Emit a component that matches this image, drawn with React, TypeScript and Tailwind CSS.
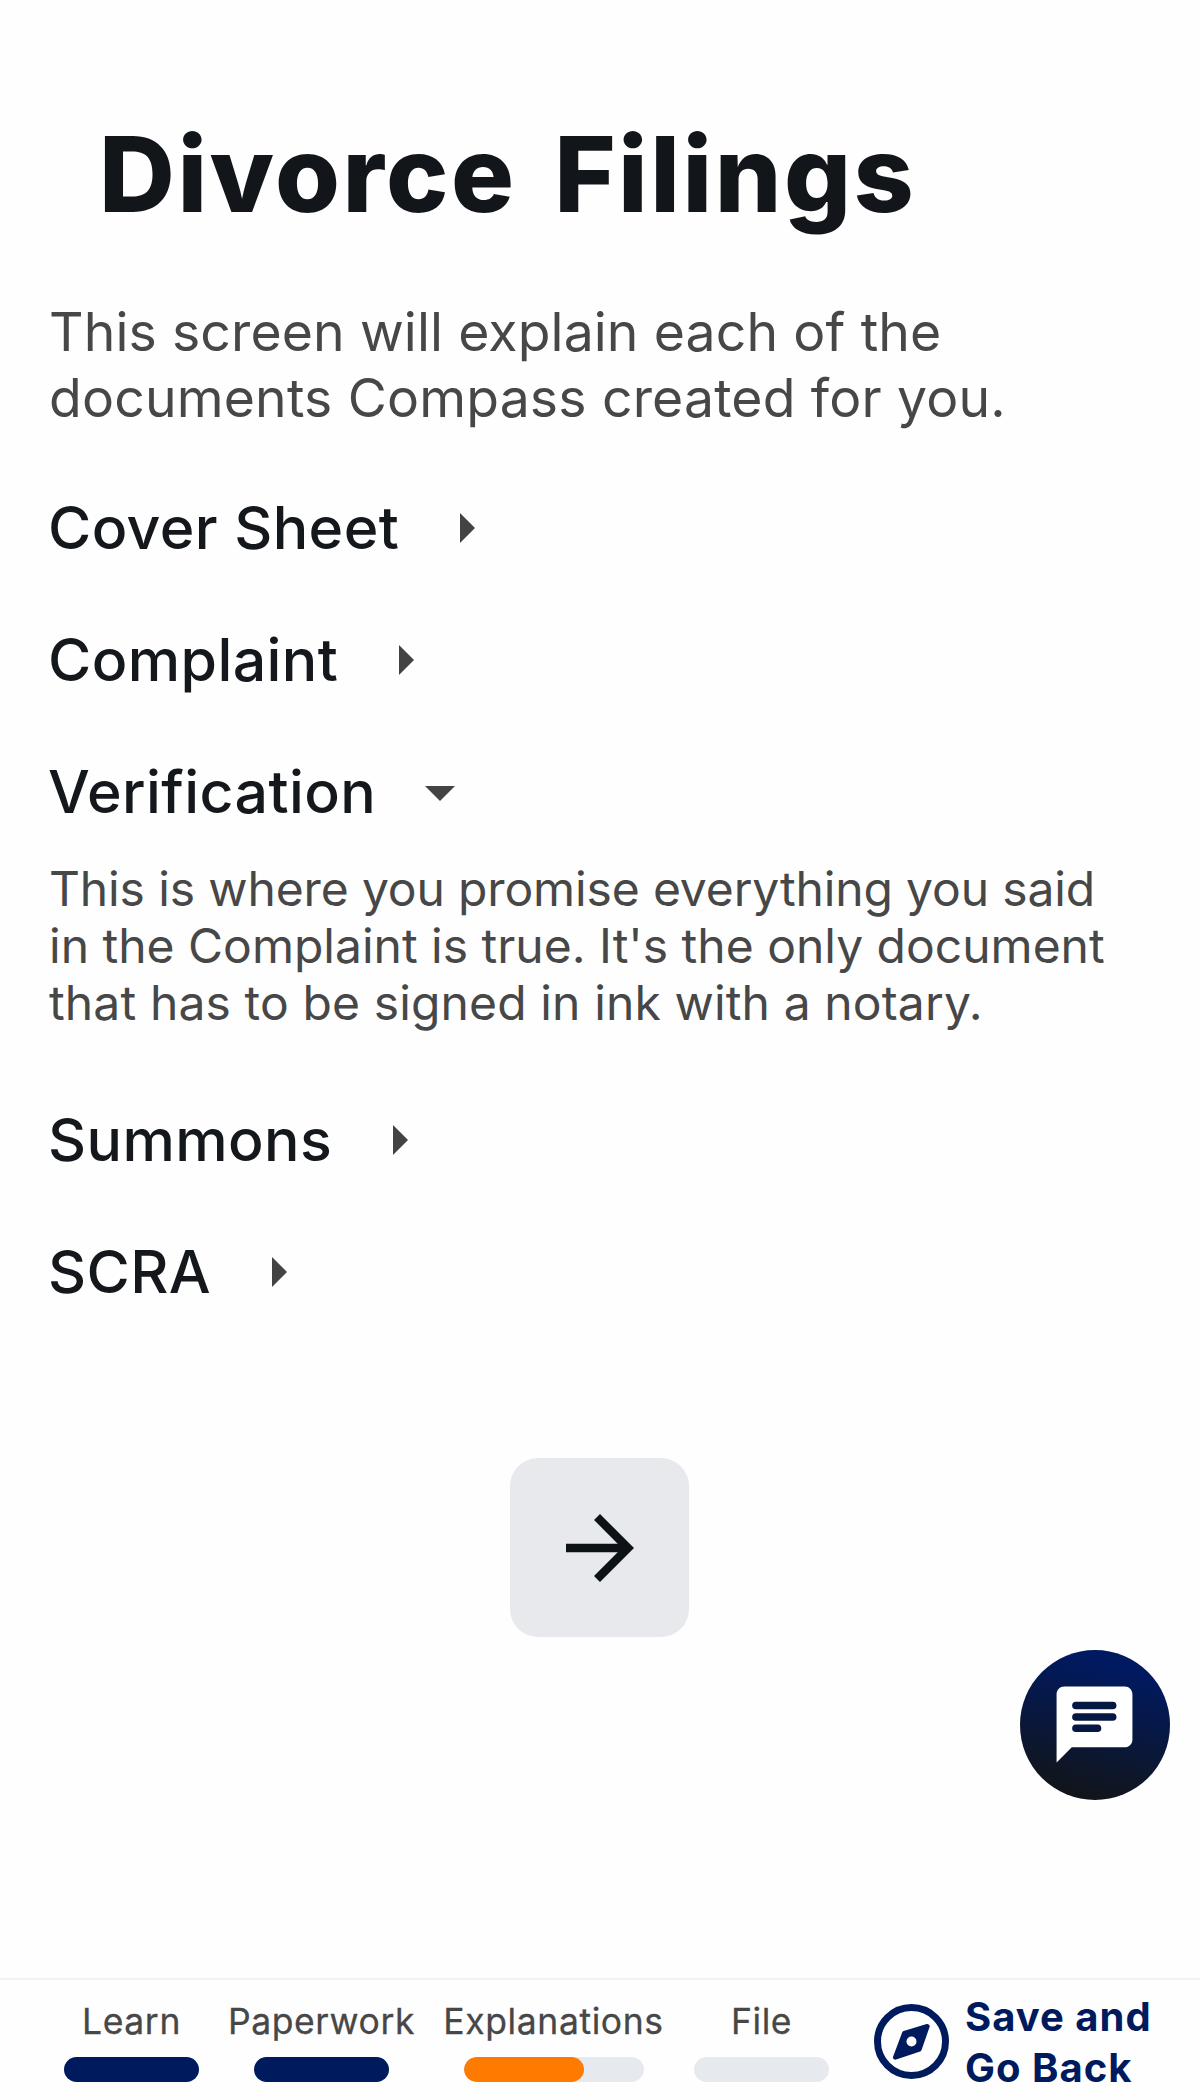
import type { ReactNode } from "react";

function Caret({ open }: { open?: boolean }) {
  return (
    <svg
      viewBox="0 0 24 24"
      className={`size-[72px] shrink-0 fill-[#434343] ${open ? "ml-[28px]" : "ml-[31px]"}`}
    >
      {open ? <path d="M7 10l5 5 5-5z" /> : <path d="M10 17l5-5-5-5z" />}
    </svg>
  );
}

function Row({ title, open, children }: { title: string; open?: boolean; children?: ReactNode }) {
  return (
    <section>
      <button className="flex h-[133px] -mb-px items-center text-[59px] leading-none font-medium tracking-[0.4px] text-[#14171b]">
        {title}
        <Caret open={open} />
      </button>
      {children}
    </section>
  );
}

function Step({
  label,
  column,
  track,
  fill,
}: {
  label: string;
  column: string;
  track: string;
  fill?: string;
}) {
  return (
    <div className={`mt-5 flex shrink-0 flex-col items-center ${column}`}>
      <span className="text-[35.5px] leading-[44px] tracking-[0.6px] whitespace-nowrap [-webkit-text-stroke:0.3px_#474747]">
        {label}
      </span>
      <div className={`mt-[13px] h-[25px] overflow-hidden rounded-full ${track}`}>
        {fill && <div className={`h-full rounded-full ${fill}`} />}
      </div>
    </div>
  );
}

export default function App() {
  return (
    <div className="relative flex h-[2100px] w-[1200px] flex-col overflow-hidden bg-[#fefefe] font-['Inter',sans-serif] text-[#474747]">
      <main className="flex flex-1 flex-col pt-[114px] pl-12">
        <h1 className="pl-[51px] text-[105px] leading-[120px] font-extrabold tracking-[2.5px] text-[#12161a] [word-spacing:12px]">
          Divorce Filings
        </h1>
        <p className="mt-[65px] mb-[30px] pl-px text-[53.5px] leading-[66px] tracking-[0.12px]">
          This screen will explain each of the
          <br />
          <span className="tracking-[0.17px]">documents Compass created for you.</span>
        </p>
        <Row title="Cover Sheet" />
        <Row title="Complaint" />
        <Row title="Verification" open>
          <p className="mt-[3px] mb-[42px] pl-px text-5xl leading-[57px]">
            <span className="tracking-[-0.13px]">This is where you promise everything you said</span>
            <br />
            in the Complaint is true. It&apos;s the only document
            <br />
            <span className="tracking-[0.13px]">that has to be signed in ink with a notary.</span>
          </p>
        </Row>
        <Row title="Summons" />
        <Row title="SCRA" />
        <button
          aria-label="Next"
          className="mt-[121px] mr-[49px] flex size-[179px] items-center justify-center self-center rounded-[28px] bg-[#e7e9ed]"
        >
          <svg viewBox="0 0 24 24" className="size-[102px] fill-[#0d1217]">
            <path d="M12 4l-1.41 1.41L16.17 11H4v2h12.17l-5.58 5.59L12 20l8-8z" />
          </svg>
        </button>
      </main>

      <button
        aria-label="Chat"
        className="absolute right-[30px] bottom-[300px] flex size-[150px] items-center justify-center rounded-full bg-[linear-gradient(195deg,#001a62_15%,#11151b_88%)]"
      >
        <svg viewBox="0 0 24 24" className="mr-px mb-px size-[91px]">
          <path
            fill="#fff"
            d="M20 2H4c-1.1 0-2 .9-2 2v18l4-4h14c1.1 0 2-.9 2-2V4c0-1.1-.9-2-2-2z"
          />
          <path d="M7.1 7h9.7M7.1 10h9.7M7.1 13h5.7" stroke="#051843" strokeWidth="2" strokeLinecap="round" />
        </svg>
      </button>

      <footer className="flex h-[122px] shrink-0 items-start gap-7 border-t-2 border-[#f2f2f2] pl-16">
        <Step label="Learn" column="w-[135px]" track="w-[135px] bg-[#001a5e]" />
        <Step label="Paperwork" column="w-[189px]" track="w-[135px] bg-[#001a5e]" />
        <Step
          label="Explanations"
          column="w-[219px]"
          track="w-[180px] bg-[#e6e9ee]"
          fill="w-[120px] bg-[#ff7b00]"
        />
        <Step label="File" column="w-[141px]" track="w-[135px] bg-[#e6e9ee]" />
        <button className="mt-[11px] ml-[14px] flex items-center text-left text-[#001a5e]">
          <svg viewBox="0 0 225 225" className="mr-4 mb-0.5 size-[75px]" fill="none" stroke="currentColor">
            <circle cx="112.5" cy="112.5" r="102" strokeWidth="21" />
            <path
              d="M160 67L91 88L64 160L136 136Z"
              fill="currentColor"
              strokeWidth="14"
              strokeLinejoin="round"
            />
            <circle cx="112.5" cy="112.5" r="15" fill="#fefefe" stroke="none" />
          </svg>
          <span className="text-[40px] leading-[51px] font-bold tracking-[1px] whitespace-nowrap">
            Save and
            <br />
            Go Back
          </span>
        </button>
      </footer>
    </div>
  );
}
